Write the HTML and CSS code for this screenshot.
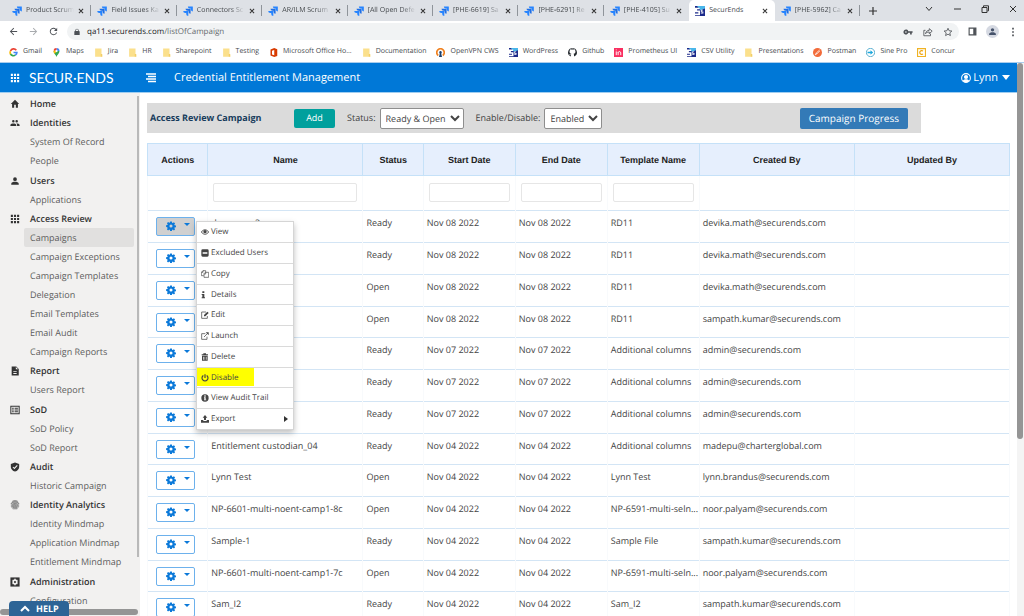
FILE: index.html
```
<!DOCTYPE html>
<html lang="en">
<head>
<meta charset="utf-8">
<title>SecurEnds</title>
<link rel="stylesheet" href="styles.css">
</head>
<body>

<!-- icon sprite -->
<svg class="sprite" xmlns="http://www.w3.org/2000/svg">
<symbol id="i-jira" viewBox="0 0 24 24"><path fill="#2684ff" d="M23 1H11.6a5 5 0 0 0 5 5h2v2a5 5 0 0 0 5 5V2z"/><path fill="#1f6fe5" d="M17.5 6.600H6a5 5 0 0 0 5 5h2.200v2a5 5 0 0 0 5 5V7.600z"/><path fill="#2684ff" d="M12 12H.5a5 5 0 0 0 5 5h2.200v2a5 5 0 0 0 5 5V13z"/></symbol>
<symbol id="i-se" viewBox="0 0 24 24"><path fill="#1c2a8a" d="M0 0h24v24H0z"/><path fill="#49b6ea" d="M5 0h19v6L13 10z"/><path fill="#fff" d="M0 4h11v4H5v3h7v11H0v-4h8v-3H0z"/><path fill="#fff" d="M14 9h5v2h-3v2h4v5h-6v-2h4v-1h-4z"/></symbol>
<symbol id="i-x" viewBox="0 0 10 10"><path d="M1.500 1.500l7 7M8.500 1.500l-7 7" stroke="currentColor" stroke-width="1.700"/></symbol>
<symbol id="i-plus" viewBox="0 0 10 10"><path d="M5 0v10M0 5h10" stroke="currentColor" stroke-width="1.500"/></symbol>
<symbol id="i-back" viewBox="0 0 24 24"><path fill="currentColor" d="M20 11H7.800l5.600-5.600L12 4l-8 8 8 8 1.400-1.400L7.800 13H20z"/></symbol>
<symbol id="i-fwd" viewBox="0 0 24 24"><path fill="currentColor" d="M4 11h12.200l-5.600-5.600L12 4l8 8-8 8-1.400-1.400 5.600-5.600H4z"/></symbol>
<symbol id="i-reload" viewBox="0 0 24 24"><path fill="currentColor" d="M17.700 6.300A8 8 0 1 0 19.700 14h-2.100A6 6 0 1 1 12 6c1.700 0 3.100.7 4.200 1.800L13 11h7V4z"/></symbol>
<symbol id="i-lock" viewBox="0 0 24 24"><path fill="currentColor" d="M18 9h-1V7A5 5 0 0 0 7 7v2H6a2 2 0 0 0-2 2v10h16V11a2 2 0 0 0-2-2zM9 9V7a3 3 0 0 1 6 0v2z"/></symbol>
<symbol id="i-key" viewBox="0 0 24 24"><path fill="currentColor" fill-rule="evenodd" d="M12.700 10a6 6 0 1 0 0 4H17v4h4v-4h2v-4zM7 14a2 2 0 1 1 0-4 2 2 0 0 1 0 4z"/></symbol>
<symbol id="i-share" viewBox="0 0 24 24"><path fill="none" stroke="currentColor" stroke-width="2" d="M6 8H2v13h16v-5M6 16c1-5 4-8 9-8V4l7 6-7 6v-4c-4 0-7 1-9 4z"/></symbol>
<symbol id="i-star" viewBox="0 0 24 24"><path fill="none" stroke="currentColor" stroke-width="2" d="M12 3l2.700 6 6.600.7-5 4.400 1.500 6.500L12 17.200l-5.800 3.400 1.500-6.500-5-4.400 6.600-.7z"/></symbol>
<symbol id="i-panel" viewBox="0 0 24 24"><path fill="none" stroke="currentColor" stroke-width="3" d="M3 3h18v18H3z"/><path fill="currentColor" d="M14 3h7v18h-7z"/></symbol>
<symbol id="i-user" viewBox="0 0 24 24"><path fill="currentColor" d="M12 12a4.500 4.500 0 1 0 0-9 4.500 4.500 0 0 0 0 9zm0 2c-4 0-9 1.500-9 4.500V21h18v-2.500c0-3-5-4.500-9-4.500z"/></symbol>
<symbol id="i-users" viewBox="0 0 24 24"><path fill="currentColor" d="M16 11a3 3 0 1 0 0-6 3 3 0 0 0 0 6zm-8 0a3 3 0 1 0 0-6 3 3 0 0 0 0 6zm0 2c-2.300 0-7 1.200-7 3.500V19h14v-2.500C15 14.200 10.300 13 8 13zm8 0l-1 .1c1.200.8 2 2 2 3.400V19h6v-2.500c0-2.300-4.700-3.500-7-3.500z"/></symbol>
<symbol id="i-dots" viewBox="0 0 24 24"><path fill="currentColor" d="M10 2h4v4h-4zM10 10h4v4h-4zM10 18h4v4h-4z"/></symbol>
<symbol id="i-home" viewBox="0 0 24 24"><path fill="currentColor" d="M10 21v-7h4v7h5v-9h3L12 2 2 12h3v9z"/></symbol>
<symbol id="i-grid" viewBox="0 0 24 24"><path fill="currentColor" d="M2 2h5v5H2zM9.500 2h5v5h-5zM17 2h5v5h-5zM2 9.500h5v5H2zM9.500 9.500h5v5h-5zM17 9.500h5v5h-5zM2 17h5v5H2zM9.500 17h5v5h-5zM17 17h5v5h-5z"/></symbol>
<symbol id="i-file" viewBox="0 0 24 24"><path fill="currentColor" fill-rule="evenodd" d="M4 1h11l6 6v16H4zM14 2.500V8h5.500zM8 12v2h8v-2zm0 5v2h8v-2z"/></symbol>
<symbol id="i-list" viewBox="0 0 24 24"><path fill="none" stroke="currentColor" stroke-width="2.500" d="M2 3h20v18H2zM5 8h4M11 8h8M5 12h4M11 12h8M5 16h4M11 16h8"/></symbol>
<symbol id="i-shield" viewBox="0 0 24 24"><path fill="currentColor" d="M12 1L2 5v7c0 5 4 9.500 10 11 6-1.500 10-6 10-11V5z"/><path fill="none" stroke="#f2f1f0" stroke-width="2.500" d="M7 12l3.500 3.500L17.500 8"/></symbol>
<symbol id="i-print" viewBox="0 0 24 24"><path fill="#b5b5b5" d="M6 2h12l4 6v8l-5 7H7l-5-7V8z"/><path fill="none" stroke="#777" stroke-width="2" d="M6 3c4-2 8-2 12 0M3 9c3-6 15-6 18 0M5 17c-1-11 14-12 14-1M9 20c-2-12 6-11 6-4v5M12 13v8"/></symbol>
<symbol id="i-admin" viewBox="0 0 24 24"><path fill="currentColor" d="M1 1h22v22H1z"/><path fill="#f2f1f0" d="M10 4h4v3l3-1 2 4-2 2 2 2-2 4-3-1v3h-4v-3l-3 1-2-4 2-2-2-2 2-4 3 1z"/><circle cx="12" cy="12" r="2.500" fill="#333"/></symbol>
<symbol id="i-gear" viewBox="-1 -1 26 26"><path fill="currentColor" fill-rule="evenodd" d="M9.800 0h4.400l.6 3.500 1.900.8L19.600 2.200l3 3-2 2.900.8 1.900 3.500.6v4.400l-3.500.6-.8 1.900 2 2.900-3 3-2.900-2-1.900.8-.6 3.500H9.800l-.6-3.500-1.900-.8-2.900 2-3-3 2-2.900-.8-1.900L-.8 14V10l3.400-.6.8-1.900-2-2.900 3-3 2.900 2.100 1.900-.8zM12 8a4 4 0 1 0 0 8 4 4 0 0 0 0-8z"/></symbol>
<symbol id="i-eye" viewBox="0 0 24 24"><path fill="none" stroke="currentColor" stroke-width="2.500" d="M1 12c6-9 16-9 22 0-6 9-16 9-22 0z"/><circle cx="12" cy="11" r="5" fill="currentColor"/></symbol>
<symbol id="i-minus" viewBox="0 0 24 24"><path fill="currentColor" fill-rule="evenodd" d="M5 1h14a4 4 0 0 1 4 4v14a4 4 0 0 1-4 4H5a4 4 0 0 1-4-4V5a4 4 0 0 1 4-4zm0 9v4h14v-4z"/></symbol>
<symbol id="i-copy" viewBox="0 0 24 24"><path fill="none" stroke="currentColor" stroke-width="2" d="M8 17H1V7l5-5h8v5M6 2v5H1M9 22V11l4-4h10v15zM14 7v5H9"/></symbol>
<symbol id="i-info" viewBox="0 0 24 24"><path fill="currentColor" d="M4 1h6v5H4zM2 9h8v10h2v3H2v-3h2v-7H2z"/></symbol>
<symbol id="i-edit" viewBox="0 0 24 24"><path fill="none" stroke="currentColor" stroke-width="2.200" d="M15 3H2v19h17v-7"/><path fill="currentColor" d="M9 12L19 2l4 4-10 10H9z"/></symbol>
<symbol id="i-launch" viewBox="0 0 24 24"><path fill="none" stroke="currentColor" stroke-width="2.200" d="M13 5H2v17h16v-8M9 15L20 4"/><path fill="currentColor" d="M14 1h9v9z"/></symbol>
<symbol id="i-trash" viewBox="0 0 24 24"><path fill="currentColor" fill-rule="evenodd" d="M7 1h8v3h6v3H2V4h5zM3 8h17v15H3zm4 3v9h2v-9zm4 0v9h1.500v-9zm4 0v9h1.500v-9z"/></symbol>
<symbol id="i-power" viewBox="0 0 24 24"><path fill="none" stroke="currentColor" stroke-width="3.500" d="M7 4.500a9 9 0 1 0 10 0M12 1v11"/></symbol>
<symbol id="i-about" viewBox="0 0 24 24"><circle cx="12" cy="12" r="11" fill="currentColor"/><path fill="#fff" d="M10 4h4v4h-4zM9 10h5v7h2v2H9v-2h1v-5H9z"/></symbol>
<symbol id="i-export" viewBox="0 0 24 24"><path fill="currentColor" d="M12 0l7 8h-4v7H9V8H5zM0 15h7v3h10v-3h7v8H0z"/></symbol>
<symbol id="i-folder" viewBox="0 0 24 24"><path fill="#fbe08c" d="M3 1h17v18l2 1v3H3z"/><path fill="#f3cf68" d="M18 16h4v7h-4z"/></symbol>
</svg>

<header class="chrome">
  <div class="tabstrip">
    <div class="tabs">
      <a class="tab" href="#"><svg><use href="#i-jira"/></svg><span>Product Scrum</span><svg class="x"><use href="#i-x"/></svg></a>
      <a class="tab" href="#"><svg><use href="#i-jira"/></svg><span>Field Issues Ka</span><svg class="x"><use href="#i-x"/></svg></a>
      <a class="tab" href="#"><svg><use href="#i-jira"/></svg><span>Connectors Sc</span><svg class="x"><use href="#i-x"/></svg></a>
      <a class="tab" href="#"><svg><use href="#i-jira"/></svg><span>AR/ILM Scrum</span><svg class="x"><use href="#i-x"/></svg></a>
      <a class="tab" href="#"><svg><use href="#i-jira"/></svg><span>[All Open Defe</span><svg class="x"><use href="#i-x"/></svg></a>
      <a class="tab" href="#"><svg><use href="#i-jira"/></svg><span>[PHE-6619] Sa</span><svg class="x"><use href="#i-x"/></svg></a>
      <a class="tab" href="#"><svg><use href="#i-jira"/></svg><span>[PHE-6291] Re</span><svg class="x"><use href="#i-x"/></svg></a>
      <a class="tab last" href="#"><svg><use href="#i-jira"/></svg><span>[PHE-4105] Su</span><svg class="x"><use href="#i-x"/></svg></a>
      <a class="tab active" href="#"><svg><use href="#i-se"/></svg><span>SecurEnds</span><svg class="x"><use href="#i-x"/></svg></a>
      <a class="tab" href="#"><svg><use href="#i-jira"/></svg><span>[PHE-5962] Ca</span><svg class="x"><use href="#i-x"/></svg></a>
    </div>
    <button class="newtab" aria-label="New tab"><svg><use href="#i-plus"/></svg></button>
    <div class="winbtns">
      <svg viewBox="0 0 10 10"><path d="M2 3l3 3.500L8 3"/></svg>
      <svg viewBox="0 0 10 10"><path d="M2 5h7"/></svg>
      <svg viewBox="0 0 10 10"><path d="M2 3.500h5v5H2zM3.500 3V1.800h5v5H7.500"/></svg>
      <svg viewBox="0 0 10 10"><path d="M2 2l6 6M8 2l-6 6"/></svg>
    </div>
  </div>
  <div class="addressbar">
    <button aria-label="Back"><svg><use href="#i-back"/></svg></button>
    <button class="off" aria-label="Forward"><svg><use href="#i-fwd"/></svg></button>
    <button aria-label="Reload"><svg><use href="#i-reload"/></svg></button>
    <div class="omnibox">
      <svg class="lock"><use href="#i-lock"/></svg>
      <span class="url">qa11.securends.com<i>/listOfCampaign</i></span>
      <svg><use href="#i-key"/></svg>
      <svg><use href="#i-share"/></svg>
      <svg><use href="#i-star"/></svg>
    </div>
    <svg class="panel"><use href="#i-panel"/></svg>
    <span class="avatar"><svg><use href="#i-user"/></svg></span>
    <svg class="more"><use href="#i-dots"/></svg>
  </div>
  <nav class="bookmarks">
    <a href="#"><svg viewBox="0 0 24 24" fill="none" stroke-width="4.500"><path stroke="#ea4335" d="M19.500 6A9 9 0 0 0 4 8"/><path stroke="#fbbc05" d="M4 8a9 9 0 0 0 0 8"/><path stroke="#34a853" d="M4 16a9 9 0 0 0 13 3"/><path stroke="#4285f4" d="M17 19c3-2 4-4 4-7h-9"/></svg>Gmail</a>
    <a href="#"><svg viewBox="0 0 24 24"><path fill="#34a853" d="M12 24C11 18 4 15 4 8h16c0 7-7 10-8 16z"/><path fill="#4285f4" d="M12 0a8 8 0 0 1 8 8h-8z"/><path fill="#ea4335" d="M12 0a8 8 0 0 0-8 6l4 3 4-4z"/><path fill="#fbbc05" d="M4 8c0 3 1 5 3 7l5-6-4-3z"/><circle cx="12" cy="8" r="3" fill="#fff"/></svg>Maps</a>
    <a href="#"><svg><use href="#i-folder"/></svg>Jira</a>
    <a href="#"><svg><use href="#i-folder"/></svg>HR</a>
    <a href="#"><svg><use href="#i-folder"/></svg>Sharepoint</a>
    <a href="#"><svg><use href="#i-folder"/></svg>Testing</a>
    <a href="#"><svg viewBox="0 0 24 24"><path fill="#d83b01" fill-rule="evenodd" d="M14 0l8 3v18l-8 3-10-4V4zM14 5L8 7v10l6 2z"/></svg>Microsoft Office Ho...</a>
    <a href="#"><svg><use href="#i-folder"/></svg>Documentation</a>
    <a href="#"><svg viewBox="0 0 24 24"><path fill="none" stroke="#f0801e" stroke-width="4.500" d="M6 20a10 10 0 1 1 12 0"/><path fill="#1b3f6c" d="M12 8a4 4 0 0 1 2 7l2 9H8l2-9a4 4 0 0 1 2-7z"/></svg>OpenVPN CWS</a>
    <a href="#"><svg><use href="#i-se"/></svg>WordPress</a>
    <a href="#"><svg viewBox="0 0 24 24"><path fill="#24292e" d="M12 1a11 11 0 0 0-4 21.500V19c-3 .5-4-1-5-3 2 0 2 2 5 1l1-2c-4-1-5-3-5-6l1-3V3l3 1h8l3-1v3l1 3c0 3-1 5-5 6l1 3v4.500A11 11 0 0 0 12 1z"/></svg>Github</a>
    <a href="#"><svg viewBox="0 0 24 24"><path fill="#f92f60" d="M0 0h24v24H0z"/><path fill="none" stroke="#fff" stroke-width="2.500" d="M6 9v10M6 4v2M11 19v-9M11 12c2-4 7-3 7 1v6"/></svg>Prometheus UI</a>
    <a href="#"><svg><use href="#i-se"/></svg>CSV Utility</a>
    <a href="#"><svg><use href="#i-folder"/></svg>Presentations</a>
    <a href="#"><svg viewBox="0 0 24 24"><circle cx="12" cy="12" r="12" fill="#f26b3a"/><path fill="none" stroke="#fff" stroke-width="2" d="M18 5l-9 8 2 2 7-7M9 13l-3 5 5-3"/></svg>Postman</a>
    <a href="#"><svg viewBox="0 0 24 24"><circle cx="12" cy="12" r="11" fill="#fff" stroke="#2b9ac4" stroke-width="2"/><path fill="#1ba7dc" d="M4 10h8V6l7 6-7 6v-4H4z"/></svg>Sine Pro</a>
    <a href="#"><svg viewBox="0 0 24 24"><path fill="#fff" stroke="#f0b323" stroke-width="3" d="M1.500 1.500h21v21h-21z"/><path fill="none" stroke="#f0a000" stroke-width="3" d="M16 8.500a5 5 0 1 0 0 7"/></svg>Concur</a>
  </nav>
</header>

<div class="page">
  <div class="app">
    <div class="topbar">
      <svg class="apps"><use href="#i-grid"/></svg>
      <a class="logo" href="#">SECUR·ENDS</a>
      <svg class="burger" viewBox="0 0 10 10"><path d="M0 1h10M2 3.500h8M0 6h10M2 8.500h8" stroke="#fff" stroke-width="1.300"/></svg>
      <h1>Credential Entitlement Management</h1>
      <a class="me" href="#"><svg viewBox="0 0 24 24"><circle cx="12" cy="12" r="10.500" fill="none" stroke="#fff" stroke-width="2.500"/><circle cx="12" cy="9.500" r="5" fill="#fff"/><path fill="#fff" d="M4 19c2-5 14-5 16 0l-4 3H8z"/></svg>Lynn<b class="caret"></b></a>
    </div>
    <div class="body">
      <aside class="side">
        <nav class="menu">
          <div class="group"><a class="head" href="#"><svg><use href="#i-home"/></svg>Home</a></div>
          <div class="group"><a class="head" href="#"><svg><use href="#i-users"/></svg>Identities</a>
            <a href="#">System Of Record</a>
            <a href="#">People</a>
          </div>
          <div class="group"><a class="head" href="#"><svg><use href="#i-user"/></svg>Users</a>
            <a href="#">Applications</a>
          </div>
          <div class="group"><a class="head" href="#"><svg><use href="#i-grid"/></svg>Access Review</a>
            <a class="on" href="#">Campaigns</a>
            <a href="#">Campaign Exceptions</a>
            <a href="#">Campaign Templates</a>
            <a href="#">Delegation</a>
            <a href="#">Email Templates</a>
            <a href="#">Email Audit</a>
            <a href="#">Campaign Reports</a>
          </div>
          <div class="group"><a class="head" href="#"><svg><use href="#i-file"/></svg>Report</a>
            <a href="#">Users Report</a>
          </div>
          <div class="group"><a class="head" href="#"><svg><use href="#i-list"/></svg>SoD</a>
            <a href="#">SoD Policy</a>
            <a href="#">SoD Report</a>
          </div>
          <div class="group"><a class="head" href="#"><svg><use href="#i-shield"/></svg>Audit</a>
            <a href="#">Historic Campaign</a>
          </div>
          <div class="group"><a class="head" href="#"><svg><use href="#i-print"/></svg>Identity Analytics</a>
            <a href="#">Identity Mindmap</a>
            <a href="#">Application Mindmap</a>
            <a href="#">Entitlement Mindmap</a>
          </div>
          <div class="group"><a class="head" href="#"><svg><use href="#i-admin"/></svg>Administration</a>
            <a href="#">Configuration</a>
          </div>
        </nav>
        <div class="vbar"></div>
        <div class="hbar"></div>
        <button class="help"><svg viewBox="0 0 10 10"><path d="M1 7l4-4 4 4" fill="none" stroke="#fff" stroke-width="2"/></svg>HELP</button>
      </aside>

      <main>
        <div class="toolbar">
          <h2>Access Review Campaign</h2>
          <button class="add">Add</button>
          <label for="status">Status:</label>
          <select id="status"><option>Ready &amp; Open</option></select>
          <label for="enabled">Enable/Disable:</label>
          <select id="enabled"><option>Enabled</option></select>
          <button class="progress">Campaign Progress</button>
        </div>

        <table>
          <colgroup><col class="w-s"><col class="w-l"><col class="w-s"><col><col><col><col class="w-l"><col class="w-l"></colgroup>
          <thead>
            <tr><th>Actions</th><th>Name</th><th>Status</th><th>Start Date</th><th>End Date</th><th>Template Name</th><th>Created By</th><th>Updated By</th></tr>
            <tr class="filter"><td></td><td><input aria-label="Name"></td><td></td><td><input aria-label="Start Date"></td><td><input aria-label="End Date"></td><td><input aria-label="Template Name"></td><td></td><td></td></tr>
          </thead>
          <tbody>
            <tr><td class="act"><button class="gear open" aria-label="Actions"><svg><use href="#i-gear"/></svg><b class="caret"></b></button>
              <div class="drop">
                <a href="#"><svg><use href="#i-eye"/></svg>View</a>
                <a href="#"><svg><use href="#i-minus"/></svg>Excluded Users</a>
                <a href="#"><svg><use href="#i-copy"/></svg>Copy</a>
                <a href="#"><svg><use href="#i-info"/></svg>Details</a>
                <a href="#"><svg><use href="#i-edit"/></svg>Edit</a>
                <a href="#"><svg><use href="#i-launch"/></svg>Launch</a>
                <a href="#"><svg><use href="#i-trash"/></svg>Delete</a>
                <a class="marked" href="#"><svg><use href="#i-power"/></svg>Disable</a>
                <a href="#"><svg><use href="#i-about"/></svg>View Audit Trail</a>
                <a href="#"><svg><use href="#i-export"/></svg>Export<b class="sub"></b></a>
              </div></td><td>demo run 2</td><td>Ready</td><td>Nov 08 2022</td><td>Nov 08 2022</td><td>RD11</td><td>devika.math@securends.com</td><td></td></tr>
            <tr><td><button class="gear" aria-label="Actions"><svg><use href="#i-gear"/></svg><b class="caret"></b></button></td><td></td><td>Ready</td><td>Nov 08 2022</td><td>Nov 08 2022</td><td>RD11</td><td>devika.math@securends.com</td><td></td></tr>
            <tr><td><button class="gear" aria-label="Actions"><svg><use href="#i-gear"/></svg><b class="caret"></b></button></td><td></td><td>Open</td><td>Nov 08 2022</td><td>Nov 08 2022</td><td>RD11</td><td>devika.math@securends.com</td><td></td></tr>
            <tr><td><button class="gear" aria-label="Actions"><svg><use href="#i-gear"/></svg><b class="caret"></b></button></td><td></td><td>Open</td><td>Nov 08 2022</td><td>Nov 08 2022</td><td>RD11</td><td>sampath.kumar@securends.com</td><td></td></tr>
            <tr><td><button class="gear" aria-label="Actions"><svg><use href="#i-gear"/></svg><b class="caret"></b></button></td><td></td><td>Ready</td><td>Nov 07 2022</td><td>Nov 07 2022</td><td>Additional columns</td><td>admin@securends.com</td><td></td></tr>
            <tr><td><button class="gear" aria-label="Actions"><svg><use href="#i-gear"/></svg><b class="caret"></b></button></td><td></td><td>Ready</td><td>Nov 07 2022</td><td>Nov 07 2022</td><td>Additional columns</td><td>admin@securends.com</td><td></td></tr>
            <tr><td><button class="gear" aria-label="Actions"><svg><use href="#i-gear"/></svg><b class="caret"></b></button></td><td></td><td>Ready</td><td>Nov 07 2022</td><td>Nov 07 2022</td><td>Additional columns</td><td>admin@securends.com</td><td></td></tr>
            <tr><td><button class="gear" aria-label="Actions"><svg><use href="#i-gear"/></svg><b class="caret"></b></button></td><td>Entitlement custodian_04</td><td>Ready</td><td>Nov 04 2022</td><td>Nov 04 2022</td><td>Additional columns</td><td>madepu@charterglobal.com</td><td></td></tr>
            <tr><td><button class="gear" aria-label="Actions"><svg><use href="#i-gear"/></svg><b class="caret"></b></button></td><td>Lynn Test</td><td>Open</td><td>Nov 04 2022</td><td>Nov 04 2022</td><td>Lynn Test</td><td>lynn.brandus@securends.com</td><td></td></tr>
            <tr><td><button class="gear" aria-label="Actions"><svg><use href="#i-gear"/></svg><b class="caret"></b></button></td><td>NP-6601-multi-noent-camp1-8c</td><td>Open</td><td>Nov 04 2022</td><td>Nov 04 2022</td><td>NP-6591-multi-seln...</td><td>noor.palyam@securends.com</td><td></td></tr>
            <tr><td><button class="gear" aria-label="Actions"><svg><use href="#i-gear"/></svg><b class="caret"></b></button></td><td>Sample-1</td><td>Ready</td><td>Nov 04 2022</td><td>Nov 04 2022</td><td>Sample File</td><td>sampath.kumar@securends.com</td><td></td></tr>
            <tr><td><button class="gear" aria-label="Actions"><svg><use href="#i-gear"/></svg><b class="caret"></b></button></td><td>NP-6601-multi-noent-camp1-7c</td><td>Open</td><td>Nov 04 2022</td><td>Nov 04 2022</td><td>NP-6591-multi-seln...</td><td>noor.palyam@securends.com</td><td></td></tr>
            <tr><td><button class="gear" aria-label="Actions"><svg><use href="#i-gear"/></svg><b class="caret"></b></button></td><td>Sam_I2</td><td>Ready</td><td>Nov 04 2022</td><td>Nov 04 2022</td><td>Sam_I2</td><td>sampath.kumar@securends.com</td><td></td></tr>
          </tbody>
        </table>
      </main>
    </div>
  </div>
  <div class="pagebar"></div>
</div>
</body>
</html>
```
FILE: styles.css
```
* { box-sizing: border-box; }
html, body { height: 100%; }
body {
  margin: 0;
  display: flex;
  flex-direction: column;
  overflow: hidden;
  background: #fff;
  color: #444;
  font: 9px/12px "Open Sans", "Noto Sans", sans-serif;
  text-rendering: geometricPrecision;
}
a { color: inherit; text-decoration: none; }
button, select, input { font: inherit; margin: 0; text-rendering: inherit; }
button { padding: 0; border: 0; background: none; color: inherit; }
svg { flex: none; display: block; width: 10px; height: 10px; }
.sprite { display: none; }
.caret { width: 0; height: 0; border: 3px solid transparent; border-top-color: currentColor; border-bottom: 0; }

/* browser */
.chrome { flex: none; font-size: 7px; color: #45494d; border-bottom: 1px solid #a9cdee; }
.tabstrip { display: flex; height: 21px; background: #dee1e6; }
.tabs { display: flex; flex: 0 1 854px; margin-left: 6px; min-width: 0; }
.tab { position: relative; display: flex; align-items: center; flex: 1 1 0; min-width: 0; gap: 4px; padding: 0 6px; }
.tab span { flex: 1; overflow: hidden; white-space: nowrap; -webkit-mask-image: linear-gradient(90deg, #000 70%, transparent); }
.tab::after { content: ""; position: absolute; right: 0; top: 5px; height: 11px; border-right: 1px solid #8f949a; }
.tab.active { background: #fff; border-radius: 5px 5px 0 0; }
.tab.active span { -webkit-mask-image: none; }
.tab.active::after, .tab.last::after { display: none; }
.tab .x { width: 6px; height: 6px; margin-right: 1px; color: #333; }
.newtab { padding: 0 9px; color: #333; }
.newtab svg { width: 8px; height: 8px; }
.winbtns { display: flex; align-items: center; gap: 18px; margin-left: auto; padding: 0 6px 3px 0; }
.winbtns path { fill: none; stroke: #333; stroke-width: 1; }
.addressbar { display: flex; align-items: center; height: 21px; padding: 0 6px 0 8px; gap: 9px; color: #4d5156; }
.addressbar button svg { width: 11px; height: 11px; }
.addressbar .off { color: #a8abae; }
.omnibox { display: flex; align-items: center; flex: 1; height: 17px; padding: 0 6px; gap: 10px; margin-left: -1px; border-radius: 9px; background: #f1f3f4; }
.omnibox .lock { width: 8px; height: 8px; }
.url { flex: 1; font-size: 8px; color: #202124; margin-left: -4px; }
.url i { font-style: normal; color: #666a6e; }
.panel { width: 9px; height: 9px; }
.avatar { padding: 2px; border-radius: 50%; background: #d5d9e2; color: #46536b; }
.avatar svg { width: 9px; height: 9px; }
.bookmarks { display: flex; align-items: center; height: 20px; padding-left: 9px; gap: 10px; white-space: nowrap; overflow: hidden; }
.bookmarks a { display: flex; align-items: center; gap: 5px; }
.bookmarks svg { width: 9px; height: 9px; }

/* app frame */
.page { display: flex; flex: 1; min-height: 0; }
.app { display: flex; flex-direction: column; flex: 1; min-width: 0; }
.pagebar { flex: none; width: 7px; background: #f4f4f4; }
.pagebar::before { content: ""; display: block; width: 6px; height: 68%; border-radius: 3px; background: #959595; }
.topbar { display: flex; align-items: center; flex: none; height: 30px; padding: 0 7px 0 10px; background: #0078d7; color: #fff; border-bottom: 1px solid #9fcdf0; }
.apps { margin-right: 9px; }
.logo { width: 117px; font: 14px/20px Lato, sans-serif; }
.topbar h1 { margin: 0 auto 0 18px; font-size: 11px; font-weight: 400; line-height: 16px; }
.me { display: flex; align-items: center; gap: 2px; font-size: 11px; }
.me .caret { margin-left: 2px; border-width: 5px 4px 0; }
.body { display: flex; flex: 1; min-height: 0; }

/* side menu */
.side { position: relative; flex: none; width: 140px; overflow: hidden; background: #f2f1f0; }
.menu { padding-top: 1px; }
.group:nth-child(3n) { padding-top: 1px; }
.menu a { display: block; height: 19px; margin: 0 6px 0 24px; padding-left: 6px; line-height: 19px; color: #5d5d5d; white-space: nowrap; }
.menu .head { display: flex; align-items: center; gap: 10px; margin-left: 0; padding-left: 10px; font-weight: 600; color: #333; }
.menu .on { background: #e1e0df; border-radius: 2px; }
.vbar { position: absolute; right: 1px; top: 3px; width: 2px; height: 461px; background: #b9b9b9; }
.hbar { position: absolute; left: 0; right: 2px; bottom: 1px; height: 6px; border-radius: 3px; background: #959595; }
.help { position: absolute; left: 9px; bottom: 0; display: flex; align-items: center; gap: 6px; height: 15px; padding: 0 10px 0 11px; border-radius: 4px 4px 0 0; background: #2d6496; color: #fff; font-weight: 700; }

/* content */
main { flex: 1; min-width: 0; padding: 10px 7px 0; overflow: hidden; }
.toolbar { display: flex; align-items: center; height: 30px; margin: 0 89px 10px 0; padding: 0 13px 0 3px; background: #dbdbdb; }
.toolbar h2 { width: 144px; margin: 0; font-size: 9px; font-weight: 700; color: #173b5c; }
.toolbar label { margin: 0 4px 0 12px; }
.toolbar select { height: 21px; padding: 0 1px; border: 1px solid #8e8e8e; border-radius: 2px; background: #fff; color: #444; }
.add { width: 41px; height: 19px; border-radius: 2px; background: #00a09d; color: #fff; }
.progress { height: 21px; margin-left: auto; padding: 0 9px; border-radius: 2px; background: #337ab7; color: #fff; font-size: 10px; }

table { width: 100%; table-layout: fixed; border-collapse: collapse; border: 1px solid #cfe5f8; }
.w-s { width: 7%; }
.w-l { width: 18%; }
th { height: 32px; padding: 0; background: #e6effd; border: 1px solid #c5e1f8; color: #222; font: 700 9px/12px "Liberation Sans", Arial, sans-serif; }
td { height: 32px; padding: 6px 3px 0; vertical-align: top; border: 1px solid #f8fafc; border-width: 0 1px; white-space: nowrap; }
tbody tr { border-top: 1px solid #d3e5f5; }
tbody tr:nth-child(4n) td { height: 31px; }
.filter td { height: 35px; padding: 7px 5px 0; }
.filter input { display: block; width: 100%; height: 19px; border: 1px solid #e6e6e6; border-radius: 2px; }
tbody td:first-child { padding-left: 8px; }
.gear { display: flex; align-items: center; gap: 8px; width: 39px; height: 19px; padding: 0 0 2px 9px; border: 1px solid #6db1ec; border-radius: 2px; background: #fff; color: #0b79d9; }
.gear .caret { margin-bottom: 2px; }
.gear.open { background: #d0d0d0; }

.act { position: relative; }
.drop { position: absolute; z-index: 2; left: 48px; top: 10px; width: 98px; border: 1px solid #d5d5d5; background: #fff; box-shadow: 0 3px 6px rgba(0,0,0,.25); font-size: 8px; }
.drop a { display: flex; align-items: center; gap: 2px; height: 21px; padding: 0 5px 0 4px; border-bottom: 1px solid #dadada; }
.drop a:nth-child(4n) { height: 20px; }
.drop a:last-child { height: 20px; border-bottom: 0; }
.drop svg { width: 8px; height: 8px; }
.drop .sub { margin-left: auto; border: 3px solid transparent; border-left: 4px solid #333; border-right: 0; }
.drop .marked { background: linear-gradient(#ff0, #ff0) left top / 57px 18px no-repeat; }
```
